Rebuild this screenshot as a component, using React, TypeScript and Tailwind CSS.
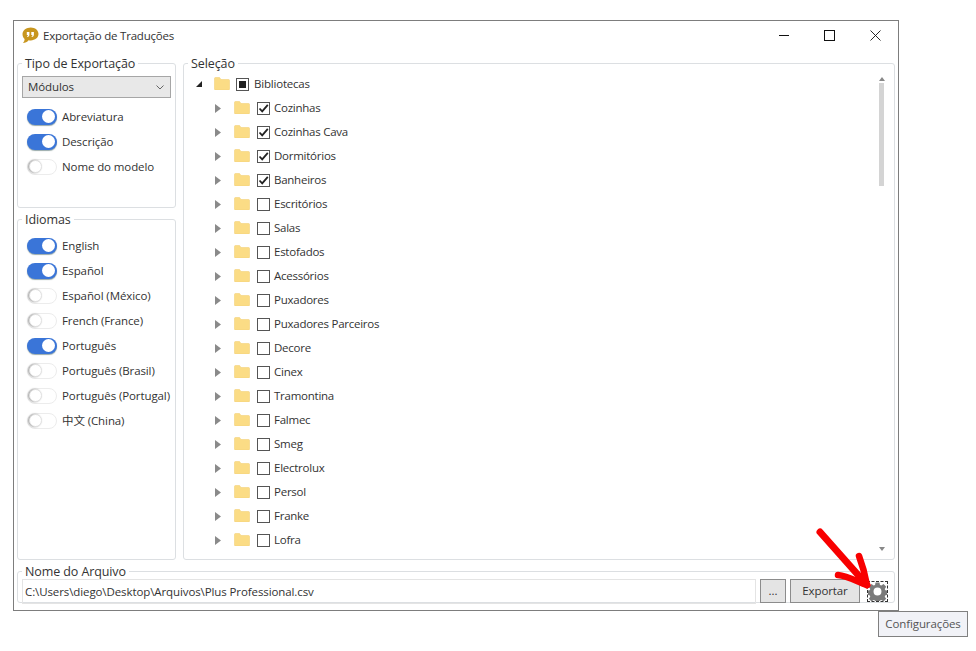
import React from "react";

const FONT = "font-['Open_Sans','Noto_Sans_CJK_SC',sans-serif]";

function Group({ title, className, inner, children }: { title: string; className?: string; inner?: string; children: React.ReactNode }) {
  return (
    <fieldset className={`border border-[#dcdfe2] rounded-[3px] min-w-0 ${className ?? ""}`}>
      <legend className="ml-[4px] px-[3px] text-[12.5px] leading-[16px] tracking-[-0.1px] text-[#333] translate-y-[1px]">{title}</legend>
      <div className={inner}>{children}</div>
    </fieldset>
  );
}

function Toggle({ on, label }: { on?: boolean; label: string }) {
  return (
    <div className="flex items-center h-[25px] gap-[5px]">
      {on ? (
        <div className="w-[30px] h-[16px] rounded-full bg-[#3a75d8] flex justify-end items-center pr-[2px] shadow-[0_1px_1px_#9aa]">
          <div className="w-[13px] h-[13px] rounded-full bg-white" />
        </div>
      ) : (
        <div className="w-[30px] h-[16px] rounded-full bg-white border border-[#ececec] flex items-center pl-[1px]">
          <div className="w-[13px] h-[13px] rounded-full bg-white border border-[#e2e2e2] shadow-[-1px_0_2px_#999]" />
        </div>
      )}
      <span className="text-[11.5px] tracking-[-0.1px] text-[#333] whitespace-nowrap">{label}</span>
    </div>
  );
}

function Folder() {
  return (
    <svg width="16" height="13" viewBox="0 0 16 13" className="shrink-0 mb-[1px] block">
      <path d="M0.500 1.500a1 1 0 0 1 1-1h4l1.500 2h7.500a1 1 0 0 1 1 1v8.500a1 1 0 0 1-1 1h-13a1 1 0 0 1-1-1z" fill="#fbdc85" stroke="#f3d27a" strokeWidth="0.6" />
    </svg>
  );
}

function Check({ state }: { state: "on" | "off" | "mixed" }) {
  return (
    <div className="w-[13px] h-[13px] border border-[#555] bg-white shrink-0 flex items-center justify-center">
      {state === "on" && (
        <svg width="11" height="11" viewBox="0 0 11 11">
          <path d="M1.500 5.500 L4.200 8.300 L9.800 1.800" fill="none" stroke="#222" strokeWidth="1.800" />
        </svg>
      )}
      {state === "mixed" && <div className="w-[7px] h-[7px] bg-[#222]" />}
    </div>
  );
}

function Row({ label, checked }: { label: string; checked?: boolean }) {
  return (
    <div className="flex items-center h-[24px] pl-[31px]">
      <svg width="6" height="9" viewBox="0 0 6 9" className="shrink-0">
        <path d="M0 0 L6 4.500 L0 9 Z" fill="#8a8a8a" />
      </svg>
      <div className="ml-[13px]"><Folder /></div>
      <div className="ml-[7px]"><Check state={checked ? "on" : "off"} /></div>
      <span className="ml-[4px] text-[11.5px] tracking-[-0.25px] text-[#333] whitespace-nowrap">{label}</span>
    </div>
  );
}

const items: [string, boolean][] = [
  ["Cozinhas", true], ["Cozinhas Cava", true], ["Dormitórios", true], ["Banheiros", true],
  ["Escritórios", false], ["Salas", false], ["Estofados", false], ["Acessórios", false],
  ["Puxadores", false], ["Puxadores Parceiros", false], ["Decore", false], ["Cinex", false],
  ["Tramontina", false], ["Falmec", false], ["Smeg", false], ["Electrolux", false],
  ["Persol", false], ["Franke", false], ["Lofra", false],
];

export default function App() {
  return (
    <div className={`w-[976px] h-[651px] bg-white relative overflow-hidden pl-[13px] pt-[20px] ${FONT}`}>
      <div className="w-[886px] h-[591px] border border-[#7d7d7d] bg-white flex flex-col px-[3px]">
        {/* Title bar */}
        <div className="h-[34px] shrink-0 flex items-center pl-[5px] pb-[6px]">
          <svg width="17" height="17" viewBox="0 0 17 17" className="shrink-0">
            <path d="M8.800 0.500C13 0.500 16.500 3.300 16.500 7.100S13 13.400 8.800 13.400c-.8 0-1.500-.1-2.200-.2C5.200 15 3.300 16 1 16c1-1 1.600-2.400 1.600-3.900C1.200 10.900.5 9.100.5 7.100.5 3.300 4.600 0.500 8.800 0.500z" fill="#c8961e" />
            <path d="M4.800 5h2.600v2.400c0 1.300-.7 2.200-2 2.600l-.4-.8c.6-.3.900-.7 1-1.300H4.800zM9.300 5h2.600v2.400c0 1.300-.7 2.200-2 2.600l-.4-.8c.6-.3.900-.7 1-1.300H9.300z" fill="#fff" />
          </svg>
          <span className="ml-[4px] text-[11.5px] tracking-[-0.2px] text-[#333] translate-y-[1px]">Exportação de Traduções</span>
          <div className="ml-auto flex items-center pr-[14px] gap-[35px]">
            <svg width="10" height="11" viewBox="0 0 10 11"><path d="M0 5.500H10" stroke="#111" strokeWidth="1" /></svg>
            <svg width="11" height="11" viewBox="0 0 11 11"><rect x="0.500" y="0.500" width="10" height="10" fill="none" stroke="#111" /></svg>
            <svg width="11" height="11" viewBox="0 0 11 11"><path d="M0.500 0.500L10.500 10.500M10.500 0.500L0.500 10.500" stroke="#111" strokeWidth="0.9" /></svg>
          </div>
        </div>

        {/* Main */}
        <div className="flex gap-[7px] h-[505px] shrink-0">
          <div className="w-[159px] shrink-0 flex flex-col gap-[3px]">
            <Group title="Tipo de Exportação" className="h-[153px]" inner="px-[4px] pb-[3px]">
              <div className="h-[22px] mt-[5px] bg-[#e8e8e8] border border-[#a6a6a6] flex items-center pl-[5px] pr-[6px] text-[11.5px] tracking-[-0.1px] text-[#333]">
                Módulos
                <svg width="8" height="5" viewBox="0 0 8 5" className="ml-auto"><path d="M0.500 0.500L4 4L7.500 0.500" fill="none" stroke="#666" /></svg>
              </div>
              <div className="mt-[6px] pl-[5px]">
                <Toggle on label="Abreviatura" />
                <Toggle on label="Descrição" />
                <Toggle label="Nome do modelo" />
              </div>
            </Group>
            <Group title="Idiomas" className="h-[349px]" inner="pl-[9px] pt-[6px]">
              <Toggle on label="English" />
              <Toggle on label="Español" />
              <Toggle label="Español (México)" />
              <Toggle label="French (France)" />
              <Toggle on label="Português" />
              <Toggle label="Português (Brasil)" />
              <Toggle label="Português (Portugal)" />
              <Toggle label="中文 (China)" />
            </Group>
          </div>

          <Group title="Seleção" className="w-[712px] shrink-0 relative">
            <div className="overflow-hidden h-[480px]">
              <div className="flex items-center h-[24px] pl-[12px] mt-[1px]">
                <svg width="6" height="6" viewBox="0 0 6 6" className="shrink-0"><path d="M6 0V6H0Z" fill="#222" /></svg>
                <div className="ml-[12px]"><Folder /></div>
                <div className="ml-[6px]"><Check state="mixed" /></div>
                <span className="ml-[5px] text-[11.5px] tracking-[-0.2px] text-[#333]">Bibliotecas</span>
              </div>
              {items.map(([label, checked]) => (
                <Row key={label} label={label} checked={checked} />
              ))}
            </div>
            <div className="absolute right-[10px] top-[6px] bottom-[8px] w-[5px] flex flex-col items-center justify-between">
              <div className="flex flex-col items-center">
                <svg width="6" height="4" viewBox="0 0 6 4"><path d="M3 0L6 4H0Z" fill="#888" /></svg>
                <div className="w-[5px] h-[103px] bg-[#d4d4d4] mt-[2px]" />
              </div>
              <svg width="6" height="4" viewBox="0 0 6 4"><path d="M0 0H6L3 4Z" fill="#888" /></svg>
            </div>
          </Group>
        </div>

        {/* File */}
        <Group title="Nome do Arquivo" className="h-[40px] mt-[3px]" inner="pl-[4px] pr-[6px]">
          <div className="flex items-start">
            <div className="w-[734px] h-[25px] border border-[#e4e4e4] flex items-center pl-[2px] text-[11.5px] tracking-[-0.1px] text-[#333] whitespace-nowrap">
              C:\Users\diego\Desktop\Arquivos\Plus Professional.csv
            </div>
            <div className="ml-[4px] w-[26px] h-[24px] bg-[#e4e4e4] border border-[#8c8c8c] flex items-center justify-center text-[11.5px] text-[#333]">...</div>
            <div className="ml-[4px] w-[70px] h-[24px] bg-[#e4e4e4] border border-[#8c8c8c] flex items-center justify-center text-[11.5px] tracking-[-0.1px] text-[#333]">Exportar</div>
            <div className="ml-[7px] mt-[2px] w-[21px] h-[21px] border border-dashed border-[#333] flex items-center justify-center">
              <svg width="19" height="19" viewBox="0 0 24 24">
                <path fillRule="evenodd" fill="#7a7a7a" d="M9.500 0.500h5l.6 3.200 1.800.8 2.700-1.900 3.400 3.400-1.900 2.700.8 1.800 3.200.6v5l-3.200.6-.8 1.800 1.900 2.700-3.400 3.400-2.700-1.900-1.800.8-.6 3.200h-5l-.6-3.200-1.800-.8-2.700 1.900-3.400-3.400 1.900-2.700-.8-1.800-3.200-.6v-5l3.200-.6.8-1.800-1.900-2.700 3.400-3.400 2.700 1.900 1.800-.8zM12 7a5 5 0 1 0 0 10 5 5 0 0 0 0-10z" />
              </svg>
            </div>
          </div>
        </Group>
      </div>

      {/* Red annotation arrow */}
      <svg className="absolute left-[812px] top-[522px]" width="70" height="84" viewBox="0 0 70 84">
        <path d="M8 10 C22 26 38 44 55 63" fill="none" stroke="#f80000" strokeWidth="7" strokeLinecap="round" />
        <path d="M26 53 C36 54 46 60 55 63 C53 52 50 42 47 34" fill="none" stroke="#f80000" strokeWidth="6.5" strokeLinecap="round" strokeLinejoin="round" />
      </svg>

      {/* Tooltip */}
      <div className="absolute left-[878px] top-[611px] w-[90px] h-[26px] bg-[#f1f2f7] border border-[#808080] flex items-center justify-center text-[11.5px] tracking-[-0.1px] text-[#555]">
        Configurações
      </div>
    </div>
  );
}
